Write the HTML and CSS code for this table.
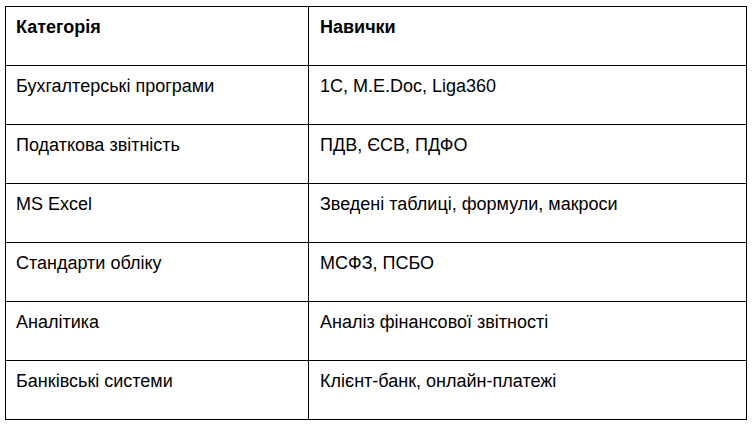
FILE: index.html
```html
<!DOCTYPE html>
<html lang="uk">
<head>
<meta charset="utf-8">
<title>Навички</title>
<link rel="stylesheet" href="styles.css">
</head>
<body>
<table class="skills">
  <colgroup><col class="col-cat"><col class="col-skill"></colgroup>
  <thead>
    <tr><th>Категорія</th><th>Навички</th></tr>
  </thead>
  <tbody>
    <tr><td>Бухгалтерські програми</td><td>1С, M.E.Doc, Liga360</td></tr>
    <tr><td>Податкова звітність</td><td>ПДВ, ЄСВ, ПДФО</td></tr>
    <tr><td>MS Excel</td><td>Зведені таблиці, формули, макроси</td></tr>
    <tr><td>Стандарти обліку</td><td>МСФЗ, ПСБО</td></tr>
    <tr><td>Аналітика</td><td>Аналіз фінансової звітності</td></tr>
    <tr><td>Банківські системи</td><td>Клієнт-банк, онлайн-платежі</td></tr>
  </tbody>
</table>
</body>
</html>
```

FILE: styles.css
```css
html, body {
  margin: 0;
  padding: 0;
  background: #fff;
}
body {
  padding: 6px 0 0 5px;
  font-family: "Liberation Sans", Arial, sans-serif;
  font-size: 18px;
  color: #000;
}
.skills {
  border-collapse: collapse;
  width: 742px;
  table-layout: fixed;
}
.col-cat { width: 303px; }
.skills th,
.skills td {
  border: 1px solid #000;
  padding: 10px 11px 0 10px;
  height: 48px;
  vertical-align: top;
  text-align: left;
  line-height: 21px;
}
.skills th {
  font-weight: bold;
}
.skills td + td,
.skills th + th {
  padding-left: 11px;
}
```
